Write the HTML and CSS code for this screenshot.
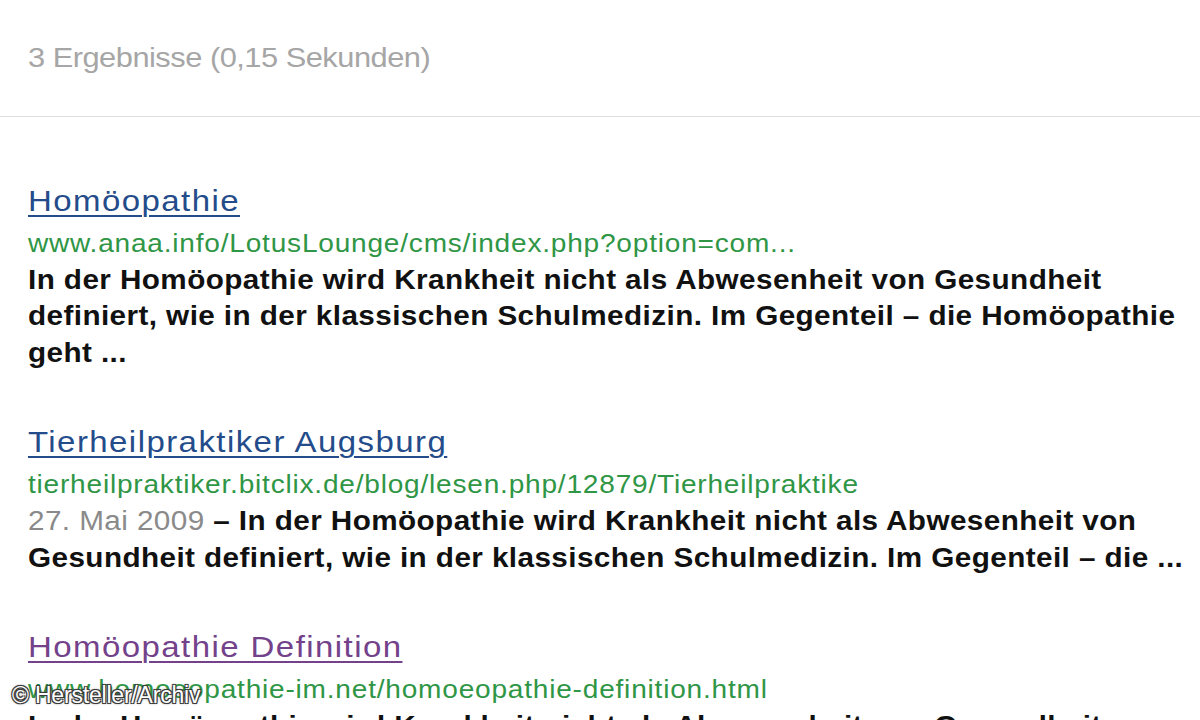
FILE: index.html
```html
<!DOCTYPE html>
<html lang="de">
<head>
<meta charset="utf-8">
<title>Suchergebnisse</title>
<link rel="stylesheet" href="styles.css">
</head>
<body>
<div class="page">
  <header class="stats-bar">
    <div class="stats">3 Ergebnisse (0,15 Sekunden)</div>
  </header>
  <ol class="results">
    <li class="result">
      <h3 class="title"><a href="#">Homöopathie</a></h3>
      <div class="url">www.anaa.info/LotusLounge/cms/index.php?option=com...</div>
      <div class="snippet">In der Homöopathie wird Krankheit nicht als Abwesenheit von Gesundheit definiert, wie in der klassischen Schulmedizin. Im Gegenteil – die Homöopathie geht ...</div>
    </li>
    <li class="result">
      <h3 class="title"><a href="#">Tierheilpraktiker Augsburg</a></h3>
      <div class="url">tierheilpraktiker.bitclix.de/blog/lesen.php/12879/Tierheilpraktike</div>
      <div class="snippet"><span class="date">27. Mai 2009</span> – In der Homöopathie wird Krankheit nicht als Abwesenheit von Gesundheit definiert, wie in der klassischen Schulmedizin. Im Gegenteil – die ...</div>
    </li>
    <li class="result">
      <h3 class="title visited"><a href="#">Homöopathie Definition</a></h3>
      <div class="url">www.homoeopathie-im.net/homoeopathie-definition.html</div>
      <div class="snippet">In der Homöopathie wird Krankheit nicht als Abwesenheit von Gesundheit definiert, wie in der klassischen Schulmedizin. Im Gegenteil – die Homöopathie geht ...</div>
    </li>
  </ol>
</div>
<div class="credit">© Hersteller/Archiv</div>
</body>
</html>
```

FILE: styles.css
```css
html, body {
  margin: 0;
  padding: 0;
  background: #ffffff;
  overflow: hidden;
  height: 720px;
}

body {
  font-family: "Liberation Sans", Arial, sans-serif;
  position: relative;
}

.page {
  width: 1105px;
  transform: scaleX(1.1);
  transform-origin: 0 0;
}

.stats-bar {
  padding: 43px 0 43px 25.45px;
  border-bottom: 1px solid #dedede;
}

.stats {
  font-size: 28px;
  line-height: 30px;
  color: #a6a6a6;
  letter-spacing: -0.45px;
  white-space: nowrap;
}

.results {
  list-style: none;
  margin: 64.6px 0 0;
  padding: 0 0 0 25.45px;
}

.result + .result {
  margin-top: 52px;
}

.title {
  margin: 0;
  font-size: 30px;
  line-height: 38px;
  font-weight: normal;
  letter-spacing: 1.3px;
  white-space: nowrap;
}

.title a {
  color: #244c8a;
  text-decoration: underline;
  text-decoration-thickness: 2px;
  text-underline-offset: 4px;
}

.title.visited a {
  color: #73428a;
}

.url {
  margin-top: 4px;
  font-size: 25.5px;
  line-height: 38px;
  color: #2f9646;
  letter-spacing: 0.72px;
  white-space: nowrap;
}

.snippet {
  margin-top: 0;
  width: 1079px;
  font-size: 27px;
  line-height: 36.5px;
  font-weight: bold;
  color: #111111;
  letter-spacing: 0.37px;
}

.date {
  font-weight: normal;
  color: #8a8a8a;
}

.credit {
  position: absolute;
  left: 12px;
  top: 682px;
  font-size: 23px;
  line-height: 26px;
  color: #ffffff;
  letter-spacing: -0.2px;
  text-shadow:
    1px 1px 0 #3a3a3a,
    -1px -1px 0 #3a3a3a,
    1px -1px 0 #3a3a3a,
    -1px 1px 0 #3a3a3a,
    0 0 3px #222222;
}
```
